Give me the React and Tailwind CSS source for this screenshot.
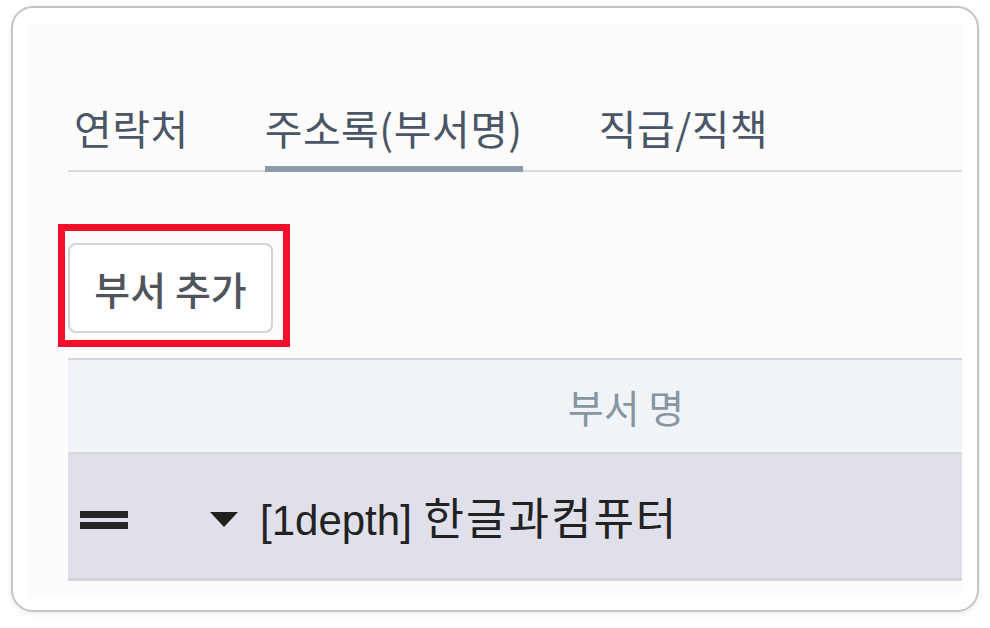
import React from "react";

const FONT = { fontFamily: '"Noto Sans CJK KR", "Noto Sans", sans-serif' };
const ROW_FONT = { fontFamily: '"Liberation Sans", "Noto Sans CJK KR", sans-serif' };

const TABS = ["연락처", "주소록(부서명)", "직급/직책"];

function DragHandle() {
  return (
    <div className="flex w-[48px] flex-col gap-[4px]">
      <div className="h-[7px] bg-[#262626]" />
      <div className="h-[7px] bg-[#262626]" />
    </div>
  );
}

export default function App() {
  const active = 1;

  return (
    <div className="h-[628px] w-[990px] bg-white pl-[11px] pt-[6px]" style={FONT}>
      <div className="h-[606px] w-[968px] rounded-[22px] border-2 border-[#c4c4c4] bg-white pl-[15px] pt-[16px] shadow-[0_2px_6px_rgba(0,0,0,0.08)]">
        {/* inner panel */}
        <div className="h-[573px] w-[934px] bg-[#fcfcfc] pl-[40px] pt-[76px]">
          {/* Tabs */}
          <div className="flex gap-[76px] border-b-2 border-[#d6dce1] pl-[6px]">
            {TABS.map((t, i) => (
              <div
                key={t}
                className={`-mb-[2px] border-b-[6px] pb-[12px] text-[41px] leading-[54px] tracking-[0.5px] text-[#4a5565] ${
                  i === active ? "border-[#8e9aab]" : "border-transparent"
                }`}
              >
                {t}
              </div>
            ))}
          </div>

          {/* Add button with highlight */}
          <div className="relative mt-[71px] w-[205px]">
            <button className="flex h-[90px] w-[205px] items-center justify-center rounded-[8px] border-2 border-[#d4d4d4] bg-white text-[39px] font-medium text-[#50545c]">
              부서 추가
            </button>
            <div className="absolute -left-[10px] -top-[19px] h-[123px] w-[232px] border-[7px] border-[#f3102b]" />
          </div>

          {/* Table */}
          <div className="mt-[25px]">
            <div className="flex h-[97px] items-center border-t-2 border-b-[3px] border-t-[#d0d6dc] border-b-[#dadbe0] bg-[#f0f4f8]">
              <div className="w-[222px]" />
              <div className="flex-1 text-center text-[39px] text-[#8896a2]">부서 명</div>
            </div>
            <div className="flex h-[126px] items-center border-b-[3px] border-[#d3d3da] bg-[#e0e0eb] pl-[12px] pt-[6px]">
              <DragHandle />
              <svg width="28" height="15" viewBox="0 0 28 15" className="ml-[82px]">
                <polygon points="0,0 28,0 14,15" fill="#1f1f1f" />
              </svg>
              <span className="ml-[22px] text-[42px] leading-none text-[#222]" style={ROW_FONT}>
                [1depth] <span className="text-[44px] tracking-[2px]">한글과컴퓨터</span>
              </span>
            </div>
          </div>
        </div>
      </div>
    </div>
  );
}
